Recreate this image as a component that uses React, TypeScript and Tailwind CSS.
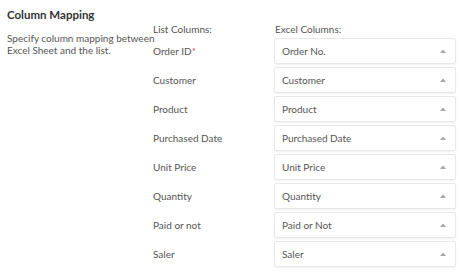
import React from "react";

const rows: [string, string, boolean?][] = [
  ["Order ID", "Order No.", true],
  ["Customer", "Customer"],
  ["Product", "Product"],
  ["Purchased Date", "Purchased Date"],
  ["Unit Price", "Unit Price"],
  ["Quantity", "Quantity"],
  ["Paid or not", "Paid or Not"],
  ["Saler", "Saler"],
];

function Caret() {
  return (
    <svg width="6" height="4" viewBox="0 0 6 4" className="shrink-0">
      <path d="M0 4 L3 0.5 L6 4 Z" fill="#a6a6a6" />
    </svg>
  );
}

export default function App() {
  return (
    <div
      className="w-[462px] h-[273px] bg-white flex text-[#555] overflow-hidden"
      style={{ fontFamily: 'Lato, "Open Sans", sans-serif' }}
    >
      <div className="w-[146px] shrink-0 pl-[7px] pt-[7px]">
        <div className="text-[11.5px] font-bold text-[#333] leading-[16px]">Column Mapping</div>
        <div className="mt-[9px] text-[10px] leading-[12px] text-[#555] whitespace-nowrap">
          Specify column mapping between
          <br />
          Excel Sheet and the list.
        </div>
      </div>
      <div className="flex-1 pt-[22px] pr-[6px]">
        <div className="flex text-[10px] leading-[14px] text-[#555]">
          <div className="w-[128px] pl-[7px]">List Columns:</div>
          <div className="pl-[1px]">Excel Columns:</div>
        </div>
        <div className="mt-[2px] flex flex-col gap-[3px]">
          {rows.map(([l, e, req]) => (
            <div key={l} className="flex items-center h-[26px]">
              <div className="w-[128px] pl-[7px] text-[10px] text-[#555]">
                {l}
                {req && <span className="text-[#e0445a]">*</span>}
              </div>
              <div className="flex-1 h-[26px] border border-[#e8e8e8] rounded-[2px] shadow-[0_1px_2px_rgba(0,0,0,0.06)] flex items-center justify-between pl-[7px] pr-[9px]">
                <span className="text-[10px] text-[#555]">{e}</span>
                <Caret />
              </div>
            </div>
          ))}
        </div>
      </div>
    </div>
  );
}
